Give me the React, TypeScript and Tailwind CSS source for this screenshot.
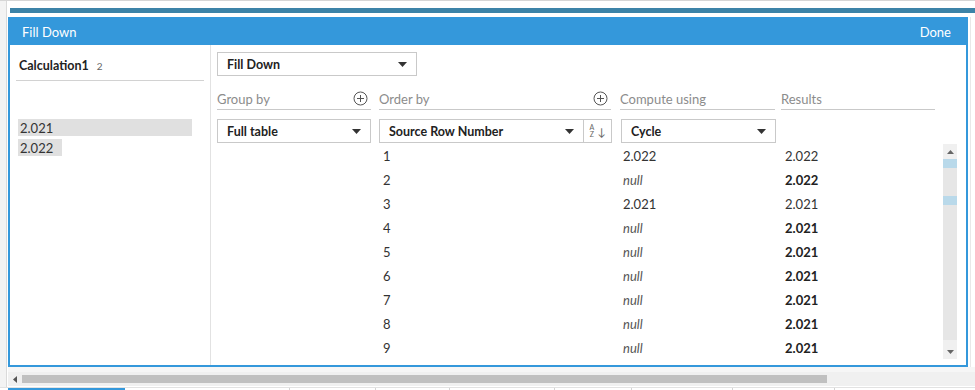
import React from "react";

const font = { fontFamily: "Lato, 'Noto Sans', sans-serif" };

function Caret() {
  return (
    <svg width="9" height="5" viewBox="0 0 9 5" className="shrink-0">
      <path d="M0 0 L9 0 L4.5 5 Z" fill="#333" />
    </svg>
  );
}

function PlusCircle() {
  return (
    <svg width="15" height="15" viewBox="0 0 15 15" className="shrink-0">
      <circle cx="7.5" cy="7.5" r="6.5" fill="none" stroke="#555" strokeWidth="1" />
      <path d="M7.5 4 V11 M4 7.5 H11" stroke="#555" strokeWidth="1" />
    </svg>
  );
}

function Select({ label, className }: { label: string; className: string }) {
  return (
    <div className={`h-[24px] border border-[#c9c9c9] flex items-center justify-between pl-[9px] pr-[9px] bg-white ${className}`}>
      <span className="text-[12.5px] font-bold text-[#222] pt-[2px]">{label}</span>
      <Caret />
    </div>
  );
}

const rows: [string, string | null, string, boolean][] = [
  ["1", "2.022", "2.022", false],
  ["2", null, "2.022", true],
  ["3", "2.021", "2.021", false],
  ["4", null, "2.021", true],
  ["5", null, "2.021", true],
  ["6", null, "2.021", true],
  ["7", null, "2.021", true],
  ["8", null, "2.021", true],
  ["9", null, "2.021", true],
];

export default function App() {
  return (
    <div className="w-[975px] h-[390px] bg-white overflow-hidden flex flex-col border-t border-[#d6d6d6]" style={font}>
      <div className="flex flex-1 min-h-0">
        {/* left strip */}
        <div className="w-[7px] bg-[#f3f3f3] border-r border-[#dadada] shrink-0" />
        <div className="flex-1 flex flex-col pl-[1px]">
          <div className="h-[7px]" />
          <div className="h-[5px] ml-[2px] bg-[#3c83a8]" />
          <div className="h-[4px]" />
          <div className="flex">
            {/* frame */}
            <div className="w-[960px] h-[350px] border-2 border-[#3498db] flex flex-col">
              <div className="h-[26px] bg-[#3498db] flex items-center justify-between pl-[12px] pr-[15px] pt-[1px] text-white text-[13px]">
                <span>Fill Down</span>
                <span>Done</span>
              </div>
              <div className="flex flex-1 min-h-0">
                {/* left panel */}
                <div className="w-[201px] border-r border-[#e2e2e2] shrink-0 pt-[10px]">
                  <div className="mx-[6px] border-b border-[#d2d2d2] h-[26px] flex items-start pl-[3px] pt-[2px]">
                    <span className="text-[12.5px] font-bold text-[#222]">Calculation1</span>
                    <span className="text-[10px] text-[#666] ml-[8px] mt-[2px]">2</span>
                  </div>
                  <div className="mt-[38px] pl-[8px] flex flex-col gap-[3px] items-start text-[13px] text-[#333]">
                    <div className="w-[174px] h-[17px] bg-[#e0e0e0] pl-[2px] leading-[18px]">2.021</div>
                    <div className="w-[44px] h-[17px] bg-[#e0e0e0] pl-[2px] leading-[18px]">2.022</div>
                  </div>
                </div>
                {/* right panel */}
                <div className="flex-1 pl-[6px] pt-[7px] flex flex-col min-w-0">
                  <Select label="Fill Down" className="w-[200px]" />
                  <div className="flex mt-[12px] h-[22px] text-[13px] text-[#8c8c8c]">
                    <div className="w-[154px] border-b border-[#c9c9c9] flex items-center justify-between pr-[3px]">
                      <span className="pt-[2px]">Group by</span>
                      <PlusCircle />
                    </div>
                    <div className="w-[232px] ml-[8px] border-b border-[#c9c9c9] flex items-center justify-between pr-[3px]">
                      <span className="pt-[2px]">Order by</span>
                      <PlusCircle />
                    </div>
                    <div className="w-[155px] ml-[9px] border-b border-[#c9c9c9] flex items-center">
                      <span className="pt-[2px]">Compute using</span>
                    </div>
                    <div className="w-[154px] ml-[6px] border-b border-[#c9c9c9] flex items-center">
                      <span className="pt-[2px]">Results</span>
                    </div>
                  </div>
                  <div className="flex mt-[9px]">
                    <Select label="Full table" className="w-[154px]" />
                    <div className="ml-[8px] flex">
                      <Select label="Source Row Number" className="w-[205px]" />
                      <div className="w-[28px] h-[24px] border border-l-0 border-[#c9c9c9] flex items-center justify-center gap-[3px] text-[#666]">
                        <div className="flex flex-col items-center text-[7px] leading-[7px]">
                          <span>A</span>
                          <span>Z</span>
                        </div>
                        <span className="text-[11px] leading-none">↓</span>
                      </div>
                    </div>
                    <Select label="Cycle" className="w-[155px] ml-[9px]" />
                  </div>
                  <div className="flex flex-1 min-h-0 mt-[1px]">
                    <div className="w-[718px] text-[13px] text-[#333] pt-[1px]">
                      {rows.map(([n, c, r, b]) => (
                        <div key={n} className="h-[24px] flex items-center">
                          <div className="w-[162px]" />
                          <div className="w-[241px] pl-[4px]">{n}</div>
                          <div className="w-[161px] pl-[3px]">
                            {c === null ? <span className="italic text-[#555]">null</span> : c}
                          </div>
                          <div className={`pl-[4px] ${b ? "font-bold text-[#222]" : ""}`}>{r}</div>
                        </div>
                      ))}
                    </div>
                    {/* vertical scrollbar */}
                    <div className="ml-[8px] w-[14px] h-[215px] bg-[#e6e6e6] flex flex-col">
                      <div className="h-[15px] bg-[#f0f0f0] flex items-center justify-center">
                        <svg width="7" height="4" viewBox="0 0 7 4"><path d="M0 4 L7 4 L3.5 0 Z" fill="#666" /></svg>
                      </div>
                      <div className="h-[9px] bg-[#b9d9ea]" />
                      <div className="h-[28px]" />
                      <div className="h-[9px] bg-[#b9d9ea]" />
                      <div className="flex-1" />
                      <div className="h-[19px] bg-[#f0f0f0] flex items-center justify-center pt-[4px]">
                        <svg width="7" height="4" viewBox="0 0 7 4"><path d="M0 0 L7 0 L3.5 4 Z" fill="#666" /></svg>
                      </div>
                    </div>
                  </div>
                </div>
              </div>
            </div>
            <div className="flex-1 border-l border-[#e8e8e8] ml-[2px]" />
          </div>
          <div className="h-[5px] bg-[#f6f6f6]" />
          <div className="h-[14px] bg-[#f0f0f0] flex items-center">
            <div className="w-[14px] flex items-center justify-center">
              <svg width="4" height="7" viewBox="0 0 4 7"><path d="M4 0 L4 7 L0 3.5 Z" fill="#555" /></svg>
            </div>
            <div className="w-[805px] h-[8px] bg-[#c0c0c0]" />
          </div>
        </div>
      </div>
      <div className="h-[3px] flex bg-white border-t border-[#e2e2e2] relative">
        <div className="w-[8px]" />
        <div className="w-[117px] bg-[#3498db]" />
        <div className="w-[165px] border-r border-[#d4d4d4]" />
        <div className="w-[86px] border-r border-[#d4d4d4]" />
        <div className="w-[74px] border-r border-[#d4d4d4]" />
        <div className="w-[105px] border-r border-[#d4d4d4]" />
        <div className="w-[77px] border-r border-[#d4d4d4]" />
        <div className="w-[101px] border-r border-[#d4d4d4]" />
        <div className="w-[102px] border-r border-[#d4d4d4]" />
      </div>
    </div>
  );
}
